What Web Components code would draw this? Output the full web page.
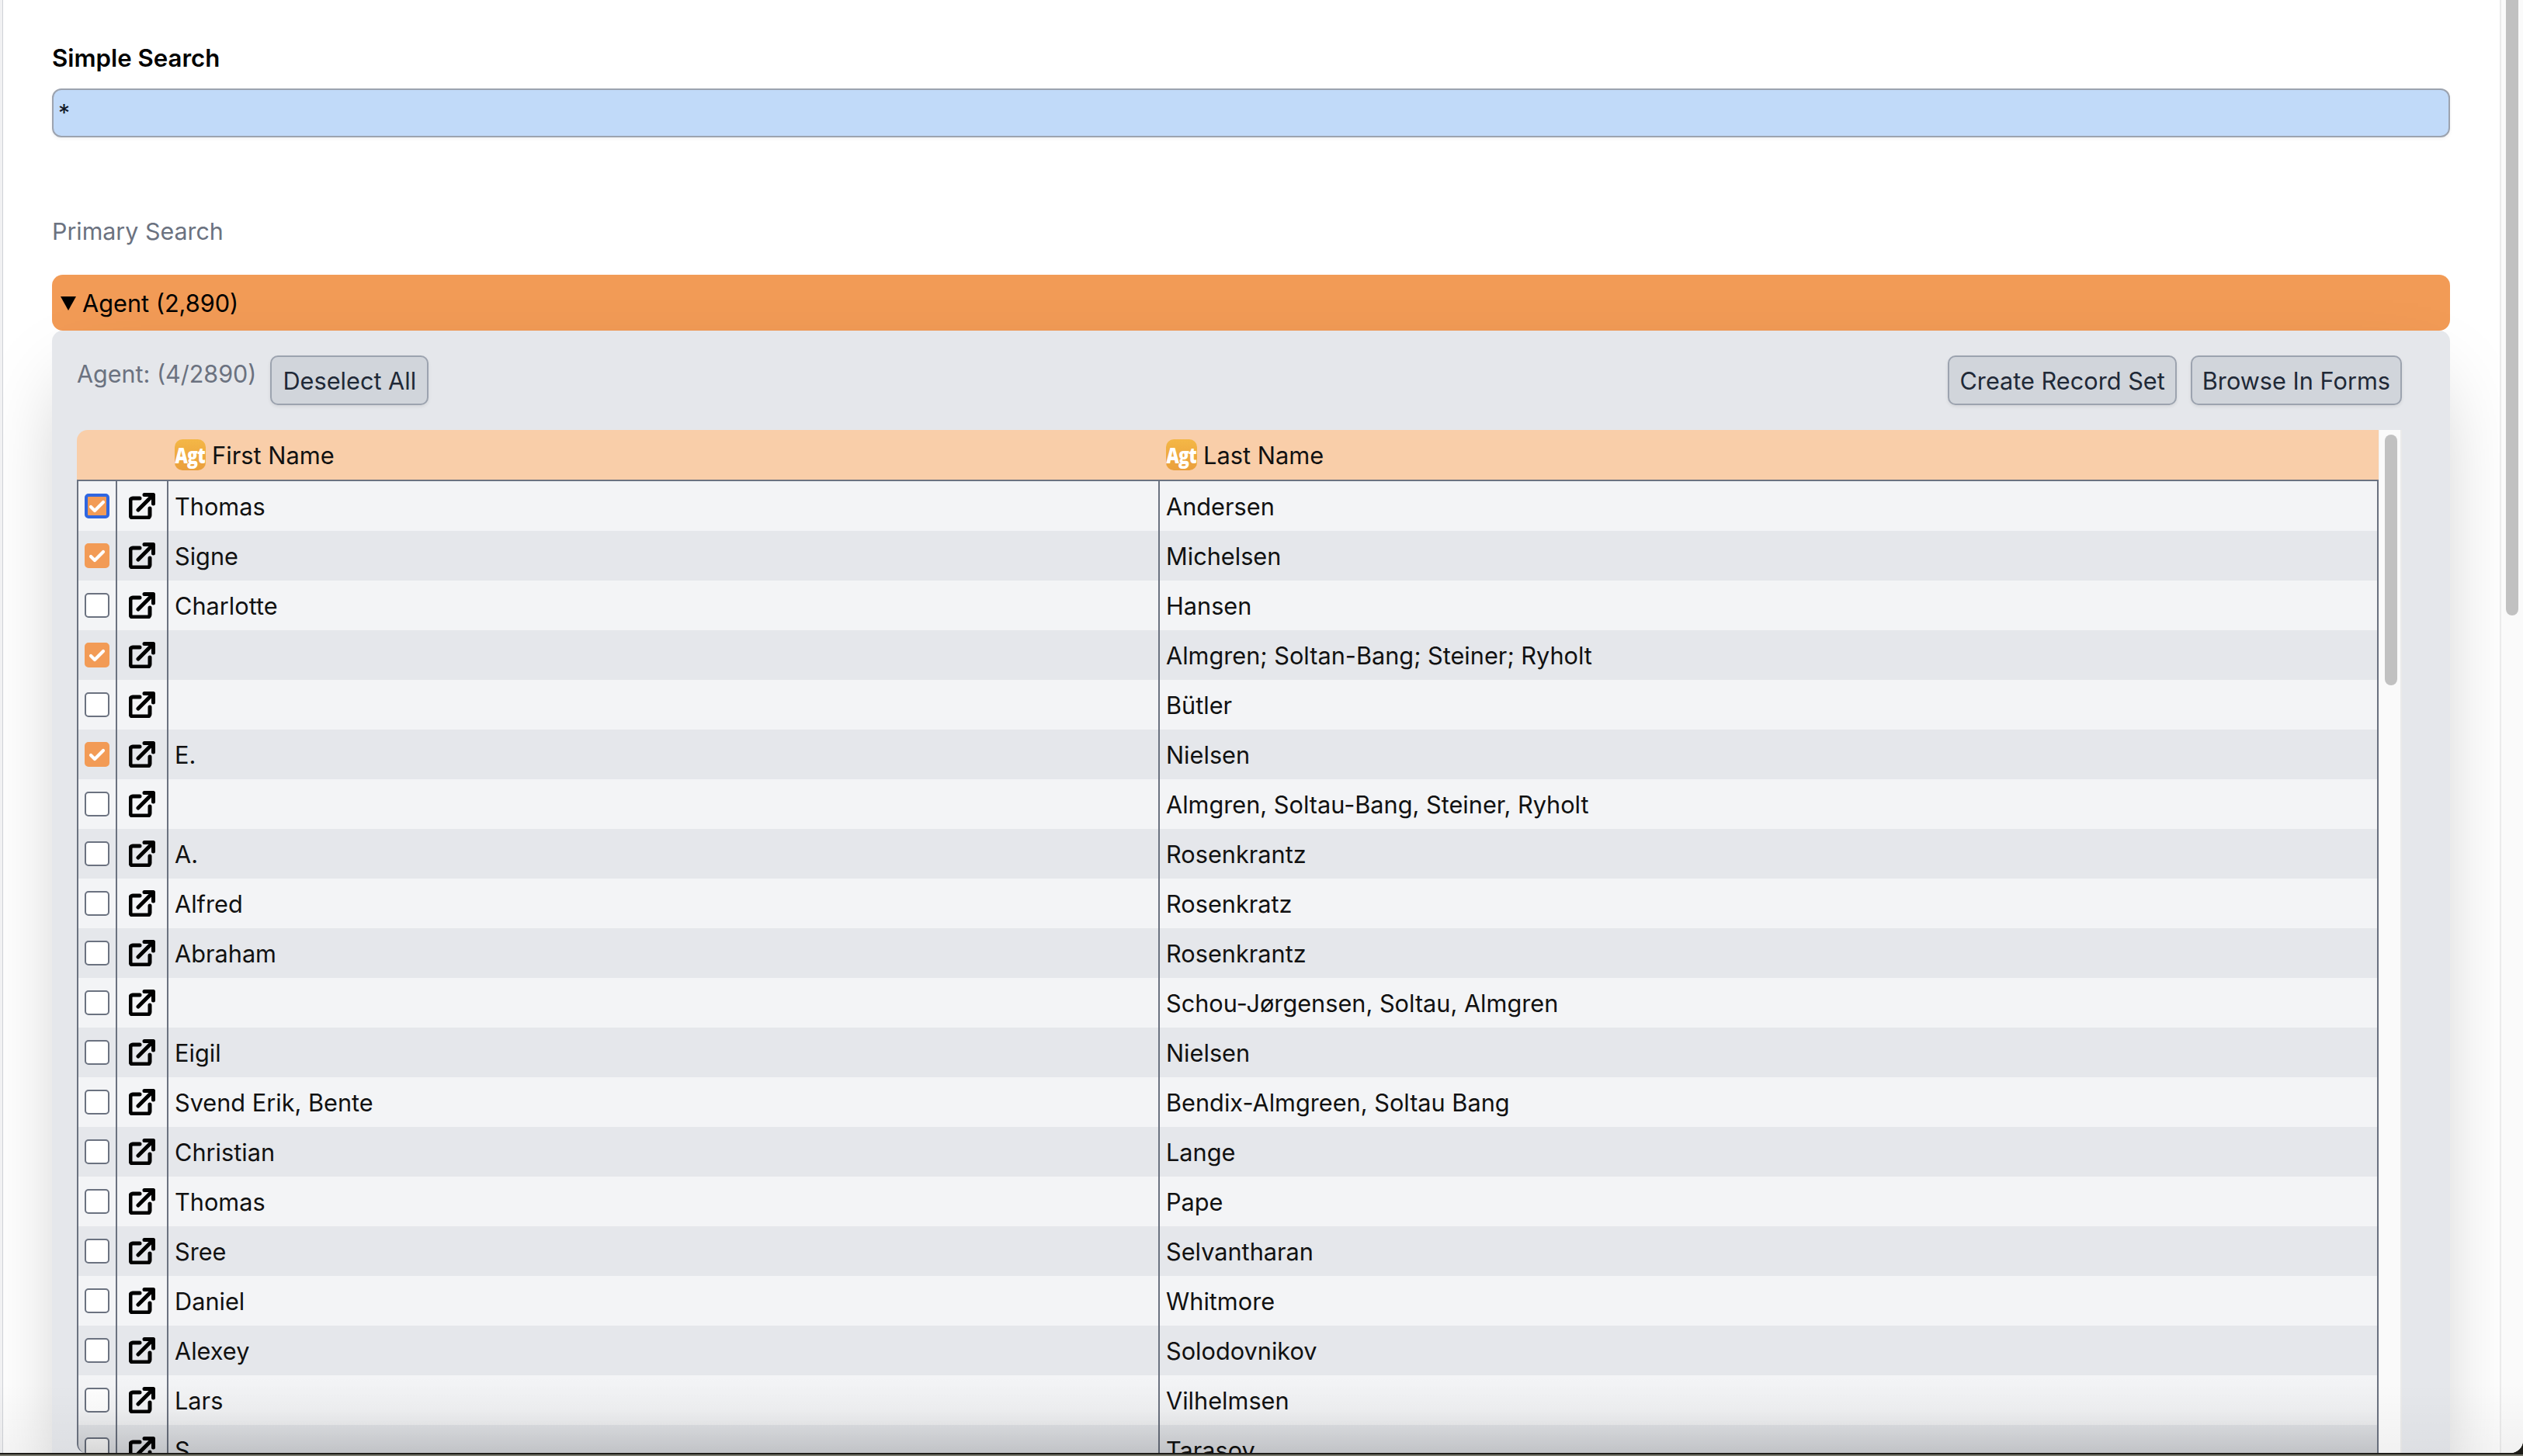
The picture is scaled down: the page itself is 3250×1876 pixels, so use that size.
<!DOCTYPE html>
<html lang="en">
<head>
<meta charset="utf-8">
<title>Simple Search</title>
<style>
  html, body { margin: 0; height: 100%; overflow: hidden; }
  body {
    background: linear-gradient(#1d1c18 0 1874px, #77776b 1874px);
    font-family: Inter, "Liberation Sans", sans-serif;
  }
</style>
</head>
<body>
<app-window>
  <search-box label="Simple Search" value="*"></search-box>
  <div style="color:#6b7280;font-size:30.4px;line-height:40px;margin-top:101px">Primary Search</div>
  <result-section title-text="Agent (2,890)">
    <result-toolbar count="Agent: (4/2890)"></result-toolbar>
    <record-table id="agents"></record-table>
  </result-section>
</app-window>

<script>
// small shared svg bits
const ICON_LINK = `<svg width="34" height="34" viewBox="0 0 34 34" fill="none" stroke="currentColor" stroke-width="5" stroke-linecap="round" stroke-linejoin="round" aria-hidden="true"><path d="M14 7H5a3 3 0 00-3 3v19a3 3 0 003 3h19a3 3 0 003-3v-9"/><path d="M12 22L31 3"/><path d="M20 2.5h11.5V14"/></svg>`;
const ICON_CHECK = `<svg width="32" height="32" viewBox="0 0 32 32" fill="none" stroke="#fff" stroke-width="4.2" stroke-linecap="round" stroke-linejoin="round" aria-hidden="true"><path d="M8 17l5 5 11-11"/></svg>`;

class AppWindow extends HTMLElement {
  connectedCallback() {
    this.attachShadow({ mode: 'open' }).innerHTML = `
      <style>
        :host {
          display: flex;
          height: 1872px;
          background: #fff;
          border-bottom-right-radius: 16px;
          overflow: hidden;
          position: relative;
        }
        .edge {
          width: 3px;
          flex-shrink: 0;
          background: #f1f1f3;
          border-right: 1px solid #cfd2d7;
        }
        main {
          flex: 1;
          min-width: 0;
          padding: 55px 64px 0 63px;
          overflow: hidden;
        }
        .page-bar {
          width: 28px;
          flex-shrink: 0;
          background: #fafafa;
          border-left: 2px solid #ebebeb;
        }
        .page-thumb {
          width: 16px;
          height: 793px;
          margin-left: 6px;
          background: #c1c1c1;
          border-radius: 0 0 8px 8px;
        }
        .fade {
          position: absolute;
          left: 0;
          right: 0;
          bottom: 0;
          height: 90px;
          background: linear-gradient(rgba(0,0,0,0), rgba(0,0,0,.035));
          pointer-events: none;
        }
      </style>
      <div class="edge"></div>
      <main><slot></slot></main>
      <div class="page-bar"><div class="page-thumb"></div></div>
      <div class="fade"></div>
    `;
  }
}

class SearchBox extends HTMLElement {
  connectedCallback() {
    this.attachShadow({ mode: 'open' }).innerHTML = `
      <style>
        :host { display: block; }
        .label {
          font-size: 31.2px;
          font-weight: 600;
          line-height: 40px;
          color: #000;
          margin-bottom: 19px;
        }
        .input {
          height: 63px;
          box-sizing: border-box;
          background: #c1daf9;
          border: 2px solid #9ca3af;
          border-radius: 12px;
          box-shadow: 0 2px 4px rgba(0,0,0,.06);
          padding: 0 6px;
          font-size: 30px;
          line-height: 58px;
          color: #111827;
        }
      </style>
      <div class="label">${this.getAttribute('label')}</div>
      <div class="input">${this.getAttribute('value')}</div>
    `;
  }
}

class ResultSection extends HTMLElement {
  connectedCallback() {
    this.attachShadow({ mode: 'open' }).innerHTML = `
      <style>
        :host { display: block; margin-top: 36px; }
        .bar {
          height: 72px;
          display: flex;
          align-items: center;
          gap: 8px;
          padding-left: 11px;
          background: #f29b56;
          border-radius: 14px;
          font-size: 30.7px;
          color: #000;
        }
        .arrow {
          width: 0;
          height: 0;
          border-left: 10.5px solid transparent;
          border-right: 10.5px solid transparent;
          border-top: 18px solid #000;
          margin-top: 1px;
        }
        .panel {
          background: #e5e7eb;
          border-radius: 14px;
          padding: 32px 62px 32px 32px;
          box-shadow: 0 50px 100px -24px rgba(0,0,0,.25);
        }
      </style>
      <div class="bar"><span class="arrow"></span><span>${this.getAttribute('title-text')}</span></div>
      <div class="panel"><slot></slot></div>
    `;
  }
}

class ActionButton extends HTMLElement {
  connectedCallback() {
    this.attachShadow({ mode: 'open' }).innerHTML = `
      <style>
        :host {
          display: inline-flex;
          align-items: center;
          box-sizing: border-box;
          height: 64px;
          padding: 0 14px;
          background: #d1d5db;
          border: 2px solid #9ca3af;
          border-radius: 10px;
          box-shadow: 0 2px 4px rgba(0,0,0,.08);
          font-size: 30.7px;
          color: #1f2937;
          white-space: nowrap;
        }
      </style>
      <slot></slot>
    `;
  }
}

class ResultToolbar extends HTMLElement {
  connectedCallback() {
    this.attachShadow({ mode: 'open' }).innerHTML = `
      <style>
        :host {
          display: flex;
          align-items: flex-start;
          gap: 18px;
          height: 64px;
          margin-bottom: 32px;
        }
        .count {
          color: #6b7280;
          font-size: 30.5px;
          line-height: 48px;
        }
        .spacer { flex: 1; }
        .tight { padding: 0 13px; }
      </style>
      <span class="count">${this.getAttribute('count')}</span>
      <action-button>Deselect All</action-button>
      <span class="spacer"></span>
      <action-button class="tight">Create Record Set</action-button>
      <action-button class="tight">Browse In Forms</action-button>
    `;
  }
}

class AgentIcon extends HTMLElement {
  connectedCallback() {
    this.attachShadow({ mode: 'open' }).innerHTML = `
      <style>
        :host {
          display: inline-flex;
          align-items: center;
          justify-content: center;
          width: 40px;
          height: 40px;
          flex-shrink: 0;
          overflow: hidden;
          border-radius: 10px;
          background: linear-gradient(#f4b746, #ea9f3c);
        }
        span {
          font-family: "Open Sans", sans-serif;
          font-weight: 800;
          font-size: 28px;
          letter-spacing: -1px;
          color: #fff;
          transform: scaleX(.82);
        }
      </style>
      <span>Agt</span>
    `;
  }
}

class RecordCheck extends HTMLElement {
  connectedCallback() {
    this.attachShadow({ mode: 'open' }).innerHTML = `
      <style>
        :host {
          display: block;
          box-sizing: border-box;
          width: 32px;
          height: 32px;
          border-radius: 5px;
          background: #fff;
          border: 2px solid #6b7280;
          position: relative;
        }
        :host([checked]) { background: #f29b56; border-color: #f29b56; }
        :host([focused]) { border: 4px solid #2f66e0; }
        svg { display: block; margin: -2px; }
        :host([focused]) svg { margin: -4px; }
      </style>
      ${this.hasAttribute('checked') ? ICON_CHECK : ''}
    `;
  }
}

class RecordRow extends HTMLElement {
  connectedCallback() {
    const { first = '', last = '' } = this.dataset;
    const flags = `${this.hasAttribute('checked') ? 'checked' : ''} ${this.hasAttribute('focused') ? 'focused' : ''}`;
    this.attachShadow({ mode: 'open' }).innerHTML = `
      <style>
        :host {
          display: grid;
          grid-template-columns: 50px 66px 1277px 1fr;
          height: 64px;
          font-size: 30.7px;
          color: #111;
          background: #f3f4f6;
        }
        :host(:nth-child(even)) { background: #e5e7eb; }
        .cell {
          box-sizing: border-box;
          display: flex;
          align-items: center;
          padding-left: 8px;
          border-right: 2px solid #6b7280;
          white-space: nowrap;
          overflow: hidden;
        }
        .cell:last-child { border-right: 0; }
        .link { padding-left: 15px; color: #000; }
      </style>
      <div class="cell"><record-check ${flags}></record-check></div>
      <div class="cell link">${ICON_LINK}</div>
      <div class="cell">${first}</div>
      <div class="cell">${last}</div>
    `;
  }
}

class RecordTable extends HTMLElement {
  set rows(list) {
    const body = this.shadowRoot.querySelector('.rows');
    for (const r of list) {
      const row = document.createElement('record-row');
      row.dataset.first = r[0];
      row.dataset.last = r[1];
      if (r[2]) row.setAttribute('checked', '');
      if (r[3]) row.setAttribute('focused', '');
      body.appendChild(row);
    }
  }

  constructor() {
    super();
    this.attachShadow({ mode: 'open' }).innerHTML = `
      <style>
        :host {
          display: flex;
          height: 1318px;
        }
        .table {
          width: 2965px;
          flex-shrink: 0;
          display: flex;
          flex-direction: column;
          min-height: 0;
        }
        .head {
          display: grid;
          grid-template-columns: 50px 66px 1277px 1fr;
          height: 64px;
          flex-shrink: 0;
          padding-left: 2px;
          background: #f9cea9;
          border-top-left-radius: 14px;
          font-size: 30.8px;
          color: #111;
        }
        .head div {
          display: flex;
          align-items: center;
          gap: 8px;
          padding-left: 8px;
        }
        .body {
          position: relative;
          flex: 1;
          min-height: 0;
          overflow: hidden;
          border: 2px solid #6b7280;
          border-bottom: 0;
          border-bottom-left-radius: 12px;
        }
        .shade {
          position: absolute;
          left: 0;
          right: 0;
          bottom: 0;
          height: 100px;
          background: linear-gradient(rgba(0,0,0,0), rgba(0,0,0,.02) 45%, rgba(0,0,0,.05) 64%, rgba(0,0,0,.125));
        }
        .track {
          flex: 1;
          box-sizing: border-box;
          background: #fafafa;
          border-left: 1px solid #f1f1f1;
          border-right: 2px solid #eaeaea;
          padding: 6px 0 0 7px;
        }
        .thumb {
          width: 16px;
          height: 323px;
          border-radius: 8px;
          background: #c1c1c1;
        }
      </style>
      <div class="table">
        <div class="head">
          <div></div><div></div>
          <div><agent-icon></agent-icon>First Name</div>
          <div><agent-icon></agent-icon>Last Name</div>
        </div>
        <div class="body">
          <div class="rows"></div>
          <div class="shade"></div>
        </div>
      </div>
      <div class="track"><div class="thumb"></div></div>
    `;
  }
}

customElements.define('app-window', AppWindow);
customElements.define('search-box', SearchBox);
customElements.define('result-section', ResultSection);
customElements.define('action-button', ActionButton);
customElements.define('result-toolbar', ResultToolbar);
customElements.define('agent-icon', AgentIcon);
customElements.define('record-check', RecordCheck);
customElements.define('record-row', RecordRow);
customElements.define('record-table', RecordTable);

document.getElementById('agents').rows = [
  ['Thomas', 'Andersen', 1, 1],
  ['Signe', 'Michelsen', 1],
  ['Charlotte', 'Hansen'],
  ['', 'Almgren; Soltan-Bang; Steiner; Ryholt', 1],
  ['', 'Bütler'],
  ['E.', 'Nielsen', 1],
  ['', 'Almgren, Soltau-Bang, Steiner, Ryholt'],
  ['A.', 'Rosenkrantz'],
  ['Alfred', 'Rosenkratz'],
  ['Abraham', 'Rosenkrantz'],
  ['', 'Schou-Jørgensen, Soltau, Almgren'],
  ['Eigil', 'Nielsen'],
  ['Svend Erik, Bente', 'Bendix-Almgreen, Soltau Bang'],
  ['Christian', 'Lange'],
  ['Thomas', 'Pape'],
  ['Sree', 'Selvantharan'],
  ['Daniel', 'Whitmore'],
  ['Alexey', 'Solodovnikov'],
  ['Lars', 'Vilhelmsen'],
  ['S.', 'Tarasov'],
];
</script>
</body>
</html>
